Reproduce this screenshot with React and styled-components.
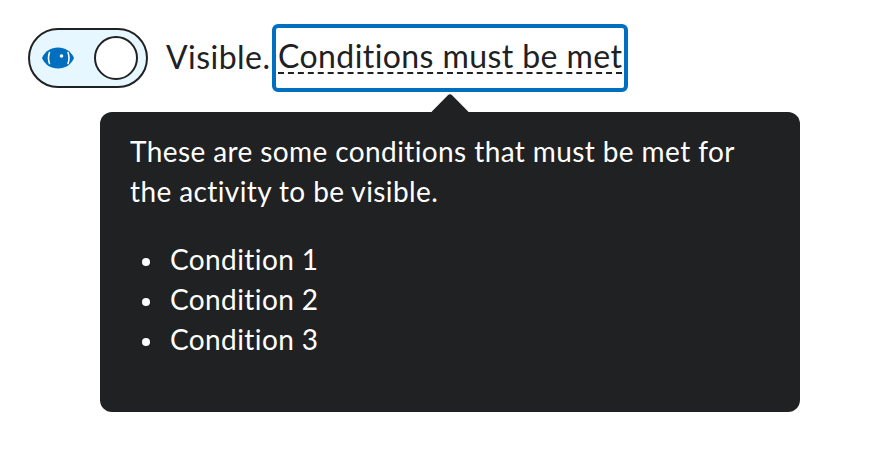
import React from "react";
import styled, { createGlobalStyle } from "styled-components";

const GlobalStyle = createGlobalStyle`
  html, body {
    margin: 0;
    padding: 0;
    background: #fff;
    font-family: "Lato", sans-serif;
    color: #202122;
    font-variant-ligatures: none;
  }
`;

const Page = styled.div`
  width: 882px;
  height: 456px;
  padding: 24px 0 0 28px;
  box-sizing: border-box;
  overflow: hidden;
`;

const Row = styled.div`
  display: flex;
  align-items: center;
  height: 68px;
`;

const Switch = styled.div`
  width: 120px;
  height: 60px;
  box-sizing: border-box;
  border: 2px solid #202122;
  border-radius: 30px;
  background: #e6f7ff;
  display: flex;
  align-items: center;
  justify-content: space-between;
  padding: 0 8px 0 12px;
  margin-right: 18px;
`;

const Knob = styled.div`
  width: 44px;
  height: 44px;
  box-sizing: border-box;
  border: 2px solid #202122;
  border-radius: 50%;
  background: #fff;
`;

const Label = styled.span`
  font-size: 32px;
  line-height: 40px;
  letter-spacing: 0.45px;
  margin: -3px 0 0 0;
  width: 106px;
`;

const TriggerWrap = styled.div`
  position: relative;
`;

const Trigger = styled.button`
  display: block;
  width: 356px;
  height: 68px;
  box-sizing: border-box;
  border: 4px solid #006fbf;
  border-radius: 6px;
  background: #fff;
  padding: 0 2px;
  font: inherit;
  color: inherit;
  text-align: left;
`;

const TriggerText = styled.span`
  display: block;
  font-size: 32px;
  line-height: 32px;
  letter-spacing: 0.42px;
  border-bottom: 2px dashed #202122;
  white-space: nowrap;
  margin-bottom: 2px;
`;

const Tooltip = styled.div`
  position: absolute;
  top: 88px;
  left: -172px;
  width: 700px;
  height: 300px;
  box-sizing: border-box;
  padding: 19px 30px;
  background: #202122;
  border-radius: 12px;
  color: #fff;
  font-size: 28px;
  line-height: 40px;
  letter-spacing: 0.4px;
`;

const Arrow = styled.span`
  position: absolute;
  top: -13px;
  left: 336px;
  width: 28px;
  height: 28px;
  background: #202122;
  border-radius: 3px;
  transform: rotate(45deg);
`;

const TipText = styled.p`
  margin: 0 0 28px;
`;

const TipList = styled.ul`
  margin: 0;
  padding: 0 0 0 40px;
  list-style: none;
`;

const TipItem = styled.li`
  position: relative;

  &::before {
    content: "";
    position: absolute;
    left: -28px;
    top: 19px;
    width: 8px;
    height: 8px;
    border-radius: 50%;
    background: #fff;
  }
`;

const EyeIcon = () => (
  <svg width="32" height="22" viewBox="0 0 32 22" aria-hidden="true">
    <path d="M0 11 C3 4 9 .5 16 .5 S29 4 32 11 C29 18 23 21.5 16 21.5 S3 18 0 11Z" fill="#006fbf" />
    <path d="M7.5 5.5 Q5.5 11 7.5 16.5" fill="none" stroke="#fff" strokeWidth="1.6" strokeLinecap="round" />
    <path d="M26 5.5 Q28 11 26 16.5" fill="none" stroke="#fff" strokeWidth="1.6" strokeLinecap="round" />
    <circle cx="19.5" cy="9" r="1.8" fill="#fff" />
  </svg>
);

export default function App() {
  return (
    <Page>
      <GlobalStyle />
      <Row>
        <Switch>
          <EyeIcon />
          <Knob />
        </Switch>
        <Label>Visible.</Label>
        <TriggerWrap>
          <Trigger>
            <TriggerText>Conditions must be met</TriggerText>
          </Trigger>
          <Tooltip>
            <Arrow />
            <TipText>These are some conditions that must be met for the activity to be visible.</TipText>
            <TipList>
              <TipItem>Condition 1</TipItem>
              <TipItem>Condition 2</TipItem>
              <TipItem>Condition 3</TipItem>
            </TipList>
          </Tooltip>
        </TriggerWrap>
      </Row>
    </Page>
  );
}
